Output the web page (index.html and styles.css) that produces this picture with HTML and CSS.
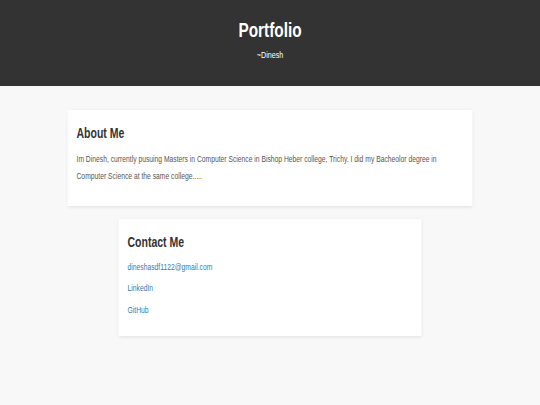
FILE: index.html
```html
<!DOCTYPE html>
<html lang="en">
<head>
  <meta charset="UTF-8">
  <title>Portfolio</title>
  <link rel="stylesheet" href="styles.css">
</head>
<body>
  <div class="frame">
    <div class="page">
      <header class="top">
        <h1>Portfolio</h1>
        <p>~Dinesh</p>
      </header>

      <section class="card about">
        <h2>About Me</h2>
        <p>Im Dinesh, currently pusuing Masters in Computer Science in Bishop Heber college, Trichy. I did my Bacheolor degree in Computer Science at the same college.....</p>
      </section>

      <section class="card contact">
        <h2>Contact Me</h2>
        <a href="#">dineshasdf1122@gmail.com</a>
        <a href="#">LinkedIn</a>
        <a href="#">GitHub</a>
      </section>
    </div>
  </div>
</body>
</html>
```

FILE: styles.css
```css
body { margin: 0; font-family: "Liberation Sans", Arial, sans-serif; background: #f8f8f8; color: #333; }
.frame { width: 100%; height: 405px; overflow: hidden; }
/* the shot is squeezed sideways, so the page is laid out at 720px and scaled */
.page { width: 720px; transform: scaleX(0.75); transform-origin: 0 0; }
.top { background: #333; color: #fff; text-align: center; height: 86px; padding-top: 18px; box-sizing: border-box; }
.top h1 { margin: 0; font-size: 20.5px; font-weight: bold; line-height: normal; }
.top p { margin: 7px 0 0; font-size: 9.5px; line-height: normal; }
.card { background: #fff; margin: 0 auto; box-sizing: border-box; box-shadow: 0 1px 4px rgba(0,0,0,0.1); }
.card h2 { margin: 0; font-size: 14px; font-weight: bold; line-height: normal; color: #333; }
.about { width: 540px; height: 96px; margin-top: 24px; padding: 15px 12px 0; }
.about p { margin: 10px 0 0; font-size: 9px; line-height: 16.5px; color: #555; }
.contact { width: 404px; height: 117px; margin-top: 13px; padding: 15px 12px 0; }
.contact h2 { margin-bottom: 7px; }
.contact a { display: block; width: max-content; font-size: 9px; line-height: 21.3px; color: #337ab7; text-decoration: none; }
```
